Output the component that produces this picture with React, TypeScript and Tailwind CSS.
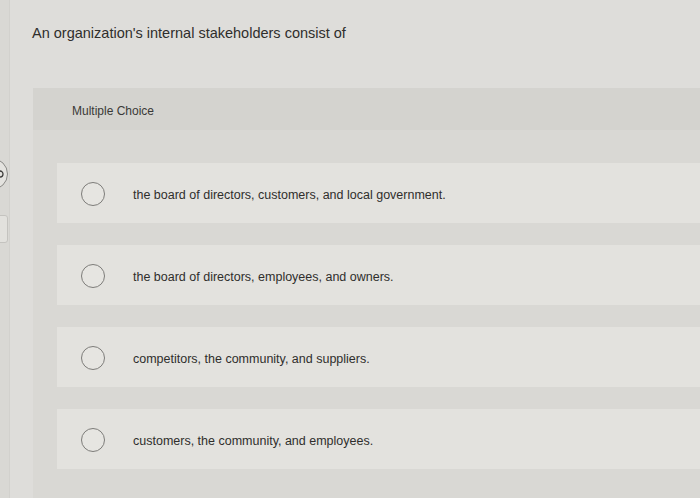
const options = [
  'the board of directors, customers, and local government.',
  'the board of directors, employees, and owners.',
  'competitors, the community, and suppliers.',
  'customers, the community, and employees.',
]

export default function App() {
  return (
    <div
      className="flex h-[498px] w-[700px] overflow-hidden bg-[#dedddA] text-[#333230]"
      style={{ fontFamily: '"Liberation Sans", Arial, sans-serif' }}
    >
      {/* cut-off sidebar */}
      <div className="flex w-[10px] shrink-0 flex-col overflow-hidden border-r border-[#d2d1cd] bg-[#d9d8d4] pt-[158px]">
        <div className="-ml-[24px] flex h-[32px] w-[32px] items-center justify-center rounded-full border border-[#8a8986] bg-[#e4e3df]">
          <svg width="10" height="10" viewBox="0 0 10 10" className="ml-[18px]">
            <path d="M1 5a3 3 0 1 0 3-3" fill="none" stroke="#3a3937" strokeWidth="1.3" />
          </svg>
        </div>
        <div className="-ml-[24px] mt-[25px] h-[28px] w-[32px] rounded-[3px] border border-[#c4c3bf] bg-[#e2e1dd]" />
      </div>

      <div className="flex min-w-0 flex-1 flex-col pl-[22px]">
        <h1 className="pt-[24px] text-[14.5px] leading-[18px] text-[#2f2e2c]">
          An organization's internal stakeholders consist of
        </h1>

        <div className="ml-[1px] mt-[46px] flex flex-1 flex-col bg-[#d9d8d4]">
          <div className="flex h-[42px] items-center bg-[#d4d3cf] pl-[39px] pt-[4px] text-[12px] text-[#3a3937]">
            Multiple Choice
          </div>
          <div className="flex flex-col gap-[22px] pl-[24px] pt-[33px]">
            {options.map((o) => (
              <div key={o} className="flex h-[60px] items-center bg-[#e3e2de] pl-[24px]">
                <span className="mt-[1px] h-[24px] w-[24px] shrink-0 rounded-full border-[1.5px] border-[#7d7c79] bg-[#e6e5e1]" />
                <span className="ml-[28px] mt-[5px] text-[12.5px] text-[#2f2e2c]">{o}</span>
              </div>
            ))}
          </div>
        </div>
      </div>
    </div>
  )
}
